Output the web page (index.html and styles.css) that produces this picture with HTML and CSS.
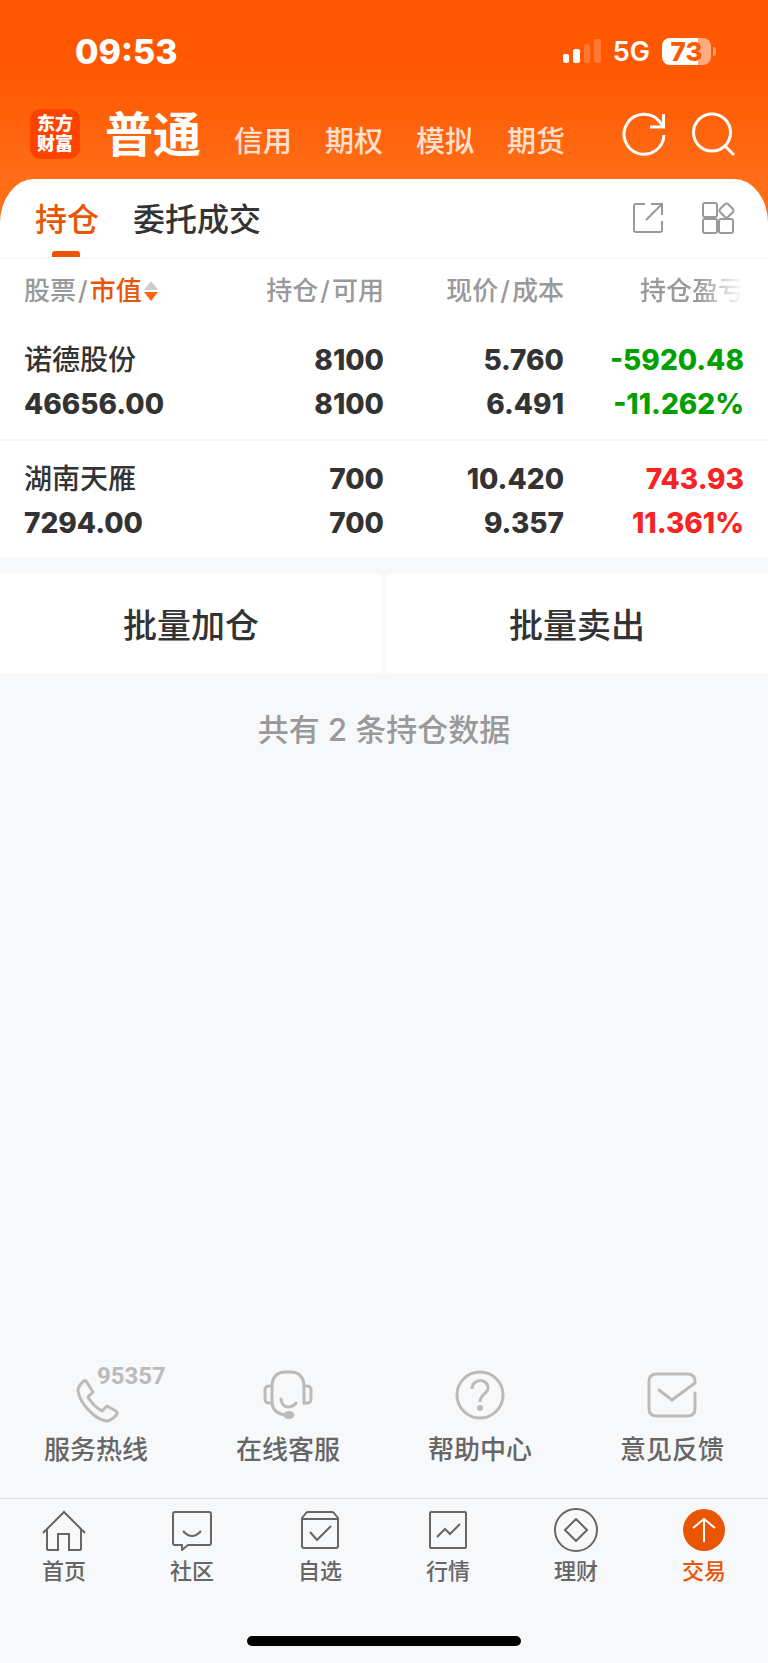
FILE: index.html
```html
<!DOCTYPE html>
<html lang="zh-CN">
<head>
    <meta charset="UTF-8">
    <meta name="viewport" content="width=device-width, initial-scale=1.0">
    <title>交易 - 持仓</title>
    <link rel="stylesheet" href="styles.css">
</head>
<body>
    <header class="header">
        <div class="status-bar">
            <span class="time">09:53</span>
            <div class="status-icons">
                <svg class="signal" width="38" height="24" viewBox="0 0 38 24" fill="#fff">
                    <rect x="0" y="15" width="6" height="9" rx="2"/>
                    <rect x="10" y="10" width="7" height="14" rx="2"/>
                    <rect x="21" y="5" width="6" height="19" rx="2" opacity=".2"/>
                    <rect x="31" y="0" width="7" height="24" rx="2" opacity=".2"/>
                </svg>
                <span class="network">5G</span>
                <span class="battery">73</span>
            </div>
        </div>
        <div class="top-nav">
            <div class="logo">东方<br>财富</div>
            <nav class="account-tabs">
                <a href="#" class="active">普通</a>
                <a href="#">信用</a>
                <a href="#">期权</a>
                <a href="#">模拟</a>
                <a href="#">期货</a>
            </nav>
            <div class="nav-actions">
                <button type="button" class="icon-btn" aria-label="刷新">
                    <svg width="44" height="44" viewBox="0 0 44 44" fill="none" stroke="#fff" stroke-width="3">
                        <path d="M42 23A20 20 0 1 1 37 9L41 14"/>
                        <path d="M41.500 2v13H28"/>
                    </svg>
                </button>
                <button type="button" class="icon-btn" aria-label="搜索">
                    <svg width="44" height="44" viewBox="0 0 44 44" fill="none" stroke="#fff" stroke-width="3">
                        <circle cx="21" cy="20.500" r="18.500"/>
                        <path d="M34 34l9 9"/>
                    </svg>
                </button>
            </div>
        </div>
    </header>

    <main class="card">
        <div class="card-tabs">
            <a href="#" class="card-tab active">持仓</a>
            <a href="#" class="card-tab">委托成交</a>
            <div class="card-actions">
                <button type="button" class="icon-btn" aria-label="分享">
                    <svg width="32" height="32" viewBox="0 0 32 32" fill="none" stroke="#999" stroke-width="2">
                        <path d="M13 2H4Q2 2 2 4V28Q2 30 4 30H28Q30 30 30 28V19"/>
                        <path d="M19 2H30V13M30 2L14 18"/>
                    </svg>
                </button>
                <button type="button" class="icon-btn" aria-label="更多功能">
                    <svg width="34" height="32" viewBox="0 0 34 32" fill="none" stroke="#999" stroke-width="2">
                        <rect x="2" y="1" width="14" height="14" rx="2"/>
                        <rect x="2" y="17" width="14" height="14" rx="2"/>
                        <rect x="18" y="17" width="14" height="14" rx="2"/>
                        <path d="M24 2Q25.500 1 27 2L32 7Q33 8.500 32 10L27 15Q25.500 16 24 15L19 10Q18 8.500 19 7Z"/>
                    </svg>
                </button>
            </div>
        </div>

        <table class="positions">
            <thead>
                <tr>
                    <th>股票<i>/</i><b>市值</b><svg class="sort" width="16" height="22" viewBox="0 0 16 22"><path d="M8 1L15 10H1Z" fill="#ccc"/><path d="M8 21L15 12H1Z" fill="#ff640f"/></svg></th>
                    <th>持仓<i>/</i>可用</th>
                    <th>现价<i>/</i>成本</th>
                    <th class="fade">持仓盈亏</th>
                </tr>
            </thead>
            <tbody>
                <tr>
                    <td><span class="name">诺德股份</span><span>46656.00</span></td>
                    <td><span>8100</span><span>8100</span></td>
                    <td><span>5.760</span><span>6.491</span></td>
                    <td class="down"><span>-5920.48</span><span>-11.262%</span></td>
                </tr>
                <tr>
                    <td><span class="name">湖南天雁</span><span>7294.00</span></td>
                    <td><span>700</span><span>700</span></td>
                    <td><span>10.420</span><span>9.357</span></td>
                    <td class="up"><span>743.93</span><span>11.361%</span></td>
                </tr>
            </tbody>
        </table>
    </main>

    <div class="batch">
        <button type="button">批量加仓</button>
        <button type="button">批量卖出</button>
    </div>

    <p class="total">共有 2 条持仓数据</p>

    <div class="services">
        <a href="#">
            <span class="service-icon">
                <svg width="50" height="50" viewBox="0 0 50 50" fill="none" stroke="#bbb" stroke-width="3" stroke-linejoin="round">
                    <path d="M13 11C9 14 7 17 7 21C9 34 24 49 35 51C40 51 43 48 46 44C47 43 46 42 45 41L36 36L31 41Q22 36 17 27L22 22L15 11Q14 10 13 11Z"/>
                </svg>
                <em>95357</em>
            </span>
            服务热线
        </a>
        <a href="#">
            <span class="service-icon">
                <svg width="50" height="50" viewBox="0 0 50 50" fill="none" stroke="#bbb" stroke-width="3" stroke-linecap="round">
                    <path d="M9 33V17Q9 2 23 2H27Q41 2 41 17V33"/>
                    <path d="M9 16H6Q2 16 2 20V29Q2 33 6 33H9Q10 43 22 45"/>
                    <path d="M41 16H44Q48 16 48 20V29Q48 33 44 33H41"/>
                    <path d="M18 29Q19 37 25 37Q30 37 33 33"/>
                    <ellipse cx="26" cy="45" rx="4" ry="2.500" fill="#bbb"/>
                </svg>
            </span>
            在线客服
        </a>
        <a href="#">
            <span class="service-icon">
                <svg width="50" height="50" viewBox="0 0 50 50" fill="none" stroke="#bbb" stroke-width="3">
                    <circle cx="25" cy="25" r="23"/>
                    <path d="M17 19C17 8 33 8 33 18C33 24 25 24 25 32"/>
                    <circle cx="25" cy="38" r="3" fill="#bbb" stroke="none"/>
                </svg>
            </span>
            帮助中心
        </a>
        <a href="#">
            <span class="service-icon">
                <svg width="50" height="50" viewBox="0 0 50 50" fill="none" stroke="#bbb" stroke-width="3" stroke-linecap="round" stroke-linejoin="round">
                    <path d="M12 20L25 30L48 13V11Q48 4 40 4H10Q2 4 2 11V39Q2 46 10 46H40Q48 46 48 39V23"/>
                </svg>
            </span>
            意见反馈
        </a>
    </div>

    <nav class="tab-bar">
        <a href="#">
            <svg width="44" height="44" viewBox="0 0 44 44" fill="none" stroke="#666" stroke-width="2">
                <path d="M1 24L22 3L43 24"/>
                <path d="M5 20V40Q5 41 6 41H16V25H27V41H38Q39 41 39 40V20"/>
            </svg>
            首页
        </a>
        <a href="#">
            <svg width="44" height="44" viewBox="0 0 44 44" fill="none" stroke="#666" stroke-width="2" stroke-linejoin="round">
                <path d="M5 3H39Q41 3 41 5V34Q41 36 39 36H18L12 41V36H5Q3 36 3 34V5Q3 3 5 3Z"/>
                <path d="M13 22Q22 32 31 22"/>
            </svg>
            社区
        </a>
        <a href="#">
            <svg width="44" height="44" viewBox="0 0 44 44" fill="none" stroke="#666" stroke-width="2" stroke-linejoin="round">
                <path d="M4 9L8 4Q9 3 10 3H34Q35 3 36 4L40 9V37Q40 39 38 39H6Q4 39 4 37ZM4 10H40"/>
                <path d="M12 23L19 31L33 17"/>
            </svg>
            自选
        </a>
        <a href="#">
            <svg width="44" height="44" viewBox="0 0 44 44" fill="none" stroke="#666" stroke-width="2">
                <rect x="4" y="3" width="36" height="36" rx="1"/>
                <path d="M11 28L19 20L24 25L34 15"/>
            </svg>
            行情
        </a>
        <a href="#">
            <svg width="44" height="44" viewBox="0 0 44 44" fill="none" stroke="#666" stroke-width="2" stroke-linejoin="round">
                <circle cx="22" cy="21" r="21"/>
                <path d="M22 10L33 21L22 32L11 21Z"/>
            </svg>
            理财
        </a>
        <a href="#" class="active">
            <svg width="44" height="44" viewBox="0 0 44 44" fill="none" stroke="#fff" stroke-width="2">
                <circle cx="22" cy="21" r="21" fill="#ea5504" stroke="none"/>
                <path d="M22 33V10M11 19L22 10L33 19"/>
            </svg>
            交易
        </a>
    </nav>
    <div class="home-indicator"></div>
</body>
</html>
```

FILE: styles.css
```css
* {
    box-sizing: border-box;
}
body {
    margin: 0;
    min-height: 100vh;
    display: flex;
    flex-direction: column;
    background-color: #f7f8fa;
    color: #333;
    font-family: Inter, 'Noto Sans CJK SC', sans-serif;
    font-weight: 500;
}
a {
    color: inherit;
    text-decoration: none;
}
button {
    border: none;
    padding: 0;
    background: none;
    color: inherit;
    font-family: inherit;
    cursor: pointer;
}
svg {
    display: block;
    overflow: visible;
}

/* 顶部 */
.header {
    padding-bottom: 44px;
    background: linear-gradient(#ff5800 75px, #ff6e17 180px);
    color: #fff;
}
.status-bar {
    display: flex;
    justify-content: space-between;
    align-items: center;
    height: 102px;
    padding: 0 57px 0 75px;
}
.time {
    font-size: 34px;
    font-weight: 800;
}
.status-icons {
    display: flex;
    align-items: center;
    gap: 12px;
}
.network {
    font-size: 27px;
    font-weight: 600;
}
.battery {
    position: relative;
    width: 49px;
    height: 27px;
    border-radius: 8px;
    background: linear-gradient(to right, #fff 73%, #ffab7f 73%);
    color: #ff5800;
    font-size: 26px;
    font-weight: 800;
    line-height: 27px;
    text-align: center;
}
.battery::after {
    content: "";
    position: absolute;
    left: 51px;
    top: 9px;
    width: 3px;
    height: 9px;
    border-radius: 0 4px 4px 0;
    background-color: #ff9a66;
}
.top-nav {
    display: flex;
    align-items: center;
    height: 77px;
    padding: 0 33px 14px 30px;
}
.logo {
    width: 50px;
    height: 50px;
    padding-top: 5px;
    border-radius: 11px;
    background-color: #ff4200;
    font-size: 18px;
    font-weight: 900;
    line-height: 20px;
    text-align: center;
}
.account-tabs {
    display: flex;
    align-items: baseline;
    gap: 33px;
    margin-left: 25px;
    padding-top: 9px;
    font-size: 29px;
    line-height: 60px;
    color: #ffe0d0;
}
.account-tabs .active {
    color: #fff;
    font-size: 48px;
    font-weight: 700;
}
.nav-actions {
    display: flex;
    gap: 25px;
    margin-left: auto;
}

/* 持仓卡片 */
.card {
    margin-top: -44px;
    border-radius: 34px 34px 0 0 / 44px 44px 0 0;
    background-color: #fff;
}
.card-tabs {
    display: flex;
    align-items: center;
    gap: 34px;
    height: 80px;
    padding: 0 33px 0 35px;
    border-bottom: 2px solid #f7f7f9;
}
.card-tab {
    position: relative;
    padding-top: 4px;
    font-size: 32px;
    line-height: 74px;
}
.card-tab.active {
    color: #ea5504;
}
.card-tab.active::after {
    content: "";
    position: absolute;
    left: 50%;
    bottom: 0;
    width: 28px;
    height: 6px;
    margin-left: -15px;
    border-radius: 3px 3px 0 0;
    background-color: #ea5504;
}
.card-actions {
    display: flex;
    gap: 37px;
    margin-left: auto;
}
.positions {
    width: 100%;
    table-layout: fixed;
    border-collapse: collapse;
}
.positions th,
.positions td {
    text-align: right;
}
.positions th {
    height: 63px;
    padding: 0 0 4px;
    color: #999;
    font-size: 26px;
    font-weight: 500;
}
.positions th:first-child,
.positions td:first-child {
    width: 204px;
    padding-left: 24px;
    text-align: left;
}
.positions th:last-child,
.positions td:last-child {
    width: 204px;
    padding-right: 24px;
}
.positions i {
    margin: 0 2px;
    font-style: normal;
}
.positions b {
    color: #ea5504;
    font-weight: 500;
}
.positions .fade {
    -webkit-mask-image: linear-gradient(to left, transparent 24px, #000 70px);
    mask-image: linear-gradient(to left, transparent 24px, #000 70px);
}
.sort {
    display: inline-block;
    margin-left: 1px;
    vertical-align: -2px;
}
.positions td {
    padding: 16px 0 13px;
    font-size: 28px;
    font-weight: 800;
}
.positions tbody tr + tr td {
    border-top: 2px solid #f7f7f9;
}
.positions span {
    display: block;
    line-height: 44px;
}
.positions .name {
    font-weight: 500;
}
.down {
    color: #00a000;
}
.up {
    color: #f82323;
}

/* 批量操作 */
.batch {
    display: flex;
    gap: 4px;
    margin-top: 16px;
}
.batch button {
    flex: 1;
    height: 99px;
    background-color: #fff;
    font-size: 34px;
    font-weight: 500;
}
.total {
    margin: 34px 0 0;
    color: #999;
    font-size: 31px;
    line-height: 46px;
    text-align: center;
}

/* 客服入口 */
.services {
    display: grid;
    grid-template-columns: repeat(4, 1fr);
    margin-top: auto;
    padding-bottom: 28px;
}
.services a {
    display: flex;
    flex-direction: column;
    align-items: center;
    gap: 10px;
    color: #666;
    font-size: 26px;
    line-height: 40px;
}
.service-icon {
    position: relative;
}
.service-icon em {
    position: absolute;
    left: 26px;
    top: -6px;
    color: #bbb;
    font-family: Roboto, sans-serif;
    font-size: 24px;
    font-style: normal;
    font-weight: 700;
    line-height: 24px;
}

/* 底部导航 */
.tab-bar {
    display: grid;
    grid-template-columns: repeat(6, 1fr);
    padding-top: 10px;
    border-top: 1px solid #dfe0e2;
}
.tab-bar a {
    display: flex;
    flex-direction: column;
    align-items: center;
    gap: 2px;
    color: #666;
    font-size: 22px;
    line-height: 32px;
}
.tab-bar .active {
    color: #ea5504;
}
.home-indicator {
    width: 274px;
    height: 10px;
    margin: 49px auto 17px;
    border-radius: 5px;
    background-color: #000;
}
```
